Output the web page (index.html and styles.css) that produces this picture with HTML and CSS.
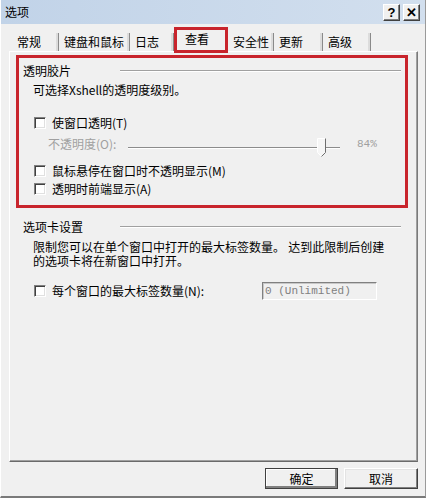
FILE: index.html
```html
<!DOCTYPE html>
<html lang="zh-CN">
<head>
    <title>选项</title>
    <meta charset="UTF-8">
    <link rel="stylesheet" href="styles.css">
</head>
<body>
    <div class="dialog">
        <div class="titlebar">
            <span class="title">选项</span>
            <div class="caption-btns">
                <span class="cap-btn">?</span>
                <span class="cap-btn">✕</span>
            </div>
        </div>

        <div class="tabs">
            <div class="tab" style="width:47px">常规</div>
            <div class="tab" style="width:71px">键盘和鼠标</div>
            <div class="tab" style="width:44px">日志</div>
            <div class="tab active" style="width:54px">查看</div>
            <div class="tab" style="width:46px">安全性</div>
            <div class="tab" style="width:49px">更新</div>
            <div class="tab" style="width:48px">高级</div>
        </div>

        <div class="panel">
            <!-- 透明胶片 -->
            <div class="group marked">
                <div class="legend first">
                    <span class="legend-text">透明胶片</span>
                    <span class="legend-line"></span>
                </div>
                <div class="desc">可选择Xshell的透明度级别。</div>

                <label class="check row-cb1">
                    <span class="box"></span>
                    <span>使窗口透明(T)</span>
                </label>

                <div class="opacity-row">
                    <span class="opacity-label">不透明度(O):</span>
                    <svg class="slider" width="212" height="22" viewBox="0 0 212 22">
                        <line x1="0" y1="11.5" x2="212" y2="11.5" stroke="#8c8c8c" stroke-width="1"/>
                        <line x1="0" y1="12.5" x2="212" y2="12.5" stroke="#ffffff" stroke-width="1"/>
                        <polygon points="189.5,2.5 197.5,2.5 197.5,16.5 193.5,20.5 189.5,16.5" fill="#f6f6f6" stroke="#ffffff"/>
                        <polyline points="197.5,2.5 197.5,16.5 193.5,20.5" fill="none" stroke="#6e6e6e"/>
                    </svg>
                    <span class="opacity-value">84%</span>
                </div>

                <label class="check row-cb2">
                    <span class="box"></span>
                    <span>鼠标悬停在窗口时不透明显示(M)</span>
                </label>
                <label class="check row-cb3">
                    <span class="box"></span>
                    <span>透明时前端显示(A)</span>
                </label>
            </div>

            <!-- 选项卡设置 -->
            <div class="group plain">
                <div class="legend second">
                    <span class="legend-text">选项卡设置</span>
                    <span class="legend-line"></span>
                </div>
                <div class="para">限制您可以在单个窗口中打开的最大标签数量。 达到此限制后创建<br>的选项卡将在新窗口中打开。</div>

                <div class="tabs-row">
                    <span class="box"></span>
                    <span class="tabs-label">每个窗口的最大标签数量(N):</span>
                    <div class="num-input">0 (Unlimited)</div>
                </div>
            </div>
        </div>

        <div class="footer">
            <button class="btn default">确定</button>
            <button class="btn">取消</button>
        </div>
    </div>
</body>
</html>
```

FILE: styles.css
```css
body {
    margin: 0;
    background-color: #f0f0f0;
    font-family: "Noto Sans CJK SC", "Liberation Sans", sans-serif;
    font-size: 12px;
    color: #000;
}
.dialog {
    width: 426px;
    height: 498px;
    box-sizing: border-box;
    background-color: #f0f0f0;
    border-left: 1px solid #ffffff;
    border-right: 1px solid #9a9a9a;
    border-bottom: 2px solid #7a7a7a;
    display: flex;
    flex-direction: column;
}

/* title bar */
.titlebar {
    height: 24px;
    flex: none;
    display: flex;
    align-items: center;
    justify-content: space-between;
    padding: 0 5px 0 4px;
    background: linear-gradient(to right, #c1d3e8, #d2dfee);
}
.title {
    line-height: 12px;
}
.caption-btns {
    display: flex;
    gap: 3px;
}
.cap-btn {
    width: 17px;
    height: 17px;
    box-sizing: border-box;
    display: flex;
    align-items: center;
    justify-content: center;
    background-color: #f0f0f0;
    border: 1px solid;
    border-color: #ffffff #404040 #404040 #ffffff;
    box-shadow: inset -1px -1px #808080;
    font-family: "Liberation Sans", sans-serif;
    font-weight: bold;
    font-size: 13px;
    line-height: 1;
}

/* tab strip */
.tabs {
    height: 27px;
    flex: none;
    display: flex;
    align-items: flex-end;
    padding-left: 11px;
}
.tab {
    height: 18px;
    box-sizing: border-box;
    padding-left: 5px;
    display: flex;
    align-items: center;
    border-right: 1px solid #8a8a8a;
    box-shadow: inset -2px 0 #dcdcdc;
    line-height: 12px;
    white-space: nowrap;
}
.tab.active {
    height: 26px;
    margin-bottom: -2px;
    padding-left: 8px;
    padding-bottom: 2px;
    border: 3px solid #c8242c;
    box-shadow: none;
    background-color: #f0f0f0;
    position: relative;
    z-index: 1;
}

/* page */
.panel {
    height: 411px;
    flex: none;
    box-sizing: border-box;
    margin: 0 7px 0 8px;
    padding: 3px 9px 0 6px;
    border: 1px solid;
    border-color: #ffffff #7a7a7a #6a6a6a #ffffff;
    box-shadow: inset -1px -1px #a0a0a0;
}
.group {
    border: 3px solid transparent;
    padding: 0 4px 10px;
    display: flex;
    flex-direction: column;
}
.group.marked {
    border-color: #c8242c;
}
.legend {
    height: 12px;
    display: flex;
    align-items: center;
}
.legend.first {
    margin-top: 7px;
}
.legend.second {
    margin-top: 10px;
}
.legend-text {
    width: 97px;
    flex: none;
    line-height: 12px;
}
.legend-line {
    flex: 1;
    height: 0;
    border-top: 1px solid #a0a0a0;
    border-bottom: 1px solid #ffffff;
}
.desc {
    margin: 7px 0 0 10px;
    line-height: 12px;
    height: 12px;
}

/* checkboxes */
.check {
    display: flex;
    align-items: center;
    gap: 6px;
    height: 12px;
    margin-left: 11px;
    line-height: 12px;
}
.box {
    width: 12px;
    height: 12px;
    flex: none;
    box-sizing: border-box;
    background-color: #ffffff;
    border: 1px solid;
    border-color: #808080 #ffffff #ffffff #808080;
    box-shadow: inset 1px 1px #404040, inset -1px -1px #e0e0e0;
}
.row-cb1 {
    margin-top: 21px;
}
.row-cb2 {
    margin-top: 7px;
}
.row-cb3 {
    margin-top: 6px;
}

/* opacity slider */
.opacity-row {
    display: flex;
    align-items: flex-start;
    height: 22px;
    margin: 7px 0 0 25px;
    color: #a0a0a0;
}
.opacity-label {
    width: 80px;
    flex: none;
    line-height: 16px;
}
.slider {
    display: block;
    flex: none;
}
.opacity-value {
    margin-left: 17px;
    line-height: 16px;
    font-family: "Liberation Mono", monospace;
    font-size: 11px;
}

/* tab limit */
.para {
    margin: 8px 0 0 10px;
    font-family: "Liberation Sans", "Noto Sans CJK SC", sans-serif;
    line-height: 14px;
}
.tabs-row {
    display: flex;
    align-items: center;
    height: 18px;
    margin: 13px 0 0 11px;
}
.tabs-label {
    width: 216px;
    flex: none;
    padding-left: 6px;
    box-sizing: border-box;
    line-height: 12px;
}
.num-input {
    width: 115px;
    height: 18px;
    box-sizing: border-box;
    padding-left: 2px;
    border: 1px solid;
    border-color: #808080 #ffffff #ffffff #808080;
    box-shadow: inset 1px 1px #c8c8c8;
    font-family: "Liberation Mono", monospace;
    font-size: 11px;
    line-height: 16px;
    color: #808080;
}

/* buttons */
.footer {
    display: flex;
    justify-content: flex-end;
    gap: 6px;
    padding: 6px 7px 0 0;
}
.btn {
    width: 74px;
    height: 21px;
    padding: 0;
    background-color: #f0f0f0;
    border: 1px solid;
    border-color: #ffffff #404040 #404040 #ffffff;
    box-shadow: inset -1px -1px #808080, inset 1px 1px #e3e3e3;
    font-family: "Noto Sans CJK SC", sans-serif;
    font-size: 12px;
    color: #000;
}
.btn.default {
    width: 73px;
    border-color: #404040;
    box-shadow: inset -2px -2px #808080, inset 1px 1px #ffffff;
}
```
